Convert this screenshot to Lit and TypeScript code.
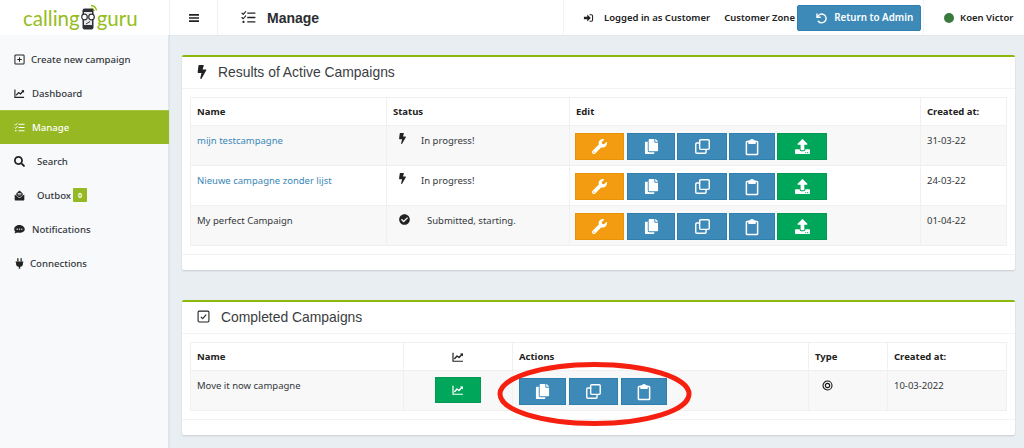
import { LitElement, html, css, svg } from "lit";
import { customElement } from "lit/decorators.js";

const fa = (vb: string, d: string) => html`<svg class="ic" viewBox="${vb}" fill="currentColor"><path d="${d}"></path></svg>`;
const st = (body: unknown) => html`<svg class="ic" viewBox="0 0 24 24" fill="none" stroke="currentColor" stroke-width="2" stroke-linecap="round" stroke-linejoin="round">${body}</svg>`;

const bolt = fa("0 0 320 512", "M296 160H180.6l42.6-129.8C227.2 15 215.7 0 200 0H56C44 0 33.8 8.9 32.2 20.8l-32 240C-1.7 275.2 9.5 288 24 288h118.7L96.6 482.5c-3.6 15.2 8 29.5 23.3 29.5 8.4 0 16.4-4.4 20.8-12l176-304c9.3-15.9-2.2-36-20.7-36z");
const wrench = fa("0 0 512 512", "M507.73 109.1c-2.24-9.03-13.54-12.09-20.12-5.51l-74.36 74.36-67.88-11.31-11.31-67.88 74.36-74.36c6.62-6.62 3.43-17.9-5.66-20.16-47.38-11.74-99.55.91-136.58 37.93-39.64 39.64-50.55 97.1-34.05 147.2L18.74 402.76c-24.99 24.99-24.99 65.51 0 90.5 24.99 24.99 65.51 24.99 90.5 0l213.21-213.21c50.12 16.71 107.47 5.68 147.37-34.22 37.07-37.07 49.7-89.32 37.91-136.73zM64 472c-13.25 0-24-10.75-24-24 0-13.26 10.75-24 24-24s24 10.74 24 24c0 13.25-10.75 24-24 24z");
const copy = fa("0 0 448 512", "M320 448v40c0 13.255-10.745 24-24 24H24c-13.255 0-24-10.745-24-24V120c0-13.255 10.745-24 24-24h72v296c0 30.879 25.121 56 56 56h168zm0-344V0H152c-13.255 0-24 10.745-24 24v368c0 13.255 10.745 24 24 24h272c13.255 0 24-10.745 24-24V128H344c-13.2 0-24-10.8-24-24zm120.971-31.029L375.029 7.029A24 24 0 0 0 358.059 0H352v96h96v-6.059a24 24 0 0 0-7.029-16.97z");
const upload = fa("0 0 512 512", "M296 384h-80c-13.3 0-24-10.7-24-24V192h-87.7c-17.8 0-26.7-21.5-14.1-34.1L242.3 5.7c7.5-7.5 19.8-7.5 27.3 0l152.2 152.2c12.6 12.6 3.7 34.1-14.1 34.1H320v168c0 13.3-10.7 24-24 24zm216-8v112c0 13.3-10.7 24-24 24H24c-13.3 0-24-10.7-24-24V376c0-13.3 10.7-24 24-24h136v8c0 30.9 25.1 56 56 56h80c30.9 0 56-25.1 56-56v-8h136c13.3 0 24 10.7 24 24zm-124 88c0-11-9-20-20-20s-20 9-20 20 9 20 20 20 20-9 20-20zm64 0c0-11-9-20-20-20s-20 9-20 20 9 20 20 20 20-9 20-20z");
const search = fa("0 0 512 512", "M505 442.7L405.3 343c-4.5-4.5-10.6-7-17-7H372c27.6-35.3 44-79.7 44-128C416 93.1 322.9 0 208 0S0 93.1 0 208s93.1 208 208 208c48.3 0 92.7-16.4 128-44v16.3c0 6.4 2.5 12.5 7 17l99.7 99.7c9.4 9.4 24.6 9.4 33.9 0l28.3-28.3c9.4-9.4 9.4-24.6.1-34zM208 336c-70.7 0-128-57.2-128-128 0-70.7 57.2-128 128-128 70.7 0 128 57.2 128 128 0 70.7-57.2 128-128 128z");
const check = fa("0 0 512 512", "M504 256c0 136.967-111.033 248-248 248S8 392.967 8 256 119.033 8 256 8s248 111.033 248 248zM227.314 387.314l184-184c6.248-6.248 6.248-16.379 0-22.627l-22.627-22.627c-6.248-6.249-16.379-6.249-22.628 0L216 308.118l-70.059-70.059c-6.248-6.248-16.379-6.248-22.628 0l-22.627 22.627c-6.248 6.248-6.248 16.379 0 22.627l104 104c6.249 6.249 16.379 6.249 22.628.001z");
const clone = st(svg`<rect x="8" y="2.500" width="13.500" height="13.500" rx="1.500"/><path d="M8 7H4a1.500 1.500 0 0 0-1.500 1.500V20a1.500 1.500 0 0 0 1.500 1.500h11.500A1.500 1.500 0 0 0 17 20v-4"/>`);
const clip = st(svg`<path d="M8 4.500H5.500a1 1 0 0 0-1 1V21a1 1 0 0 0 1 1h13a1 1 0 0 0 1-1V5.500a1 1 0 0 0-1-1H16"/><path d="M8 7V4h2.200a1.800 1.800 0 0 1 3.600 0H16v3z" fill="currentColor"/>`);
const chart = st(svg`<path d="M2 3.500V20.500H22" stroke-linecap="butt" stroke-linejoin="miter" stroke-width="2.400"/><path d="M5.500 15l4.500-5 4 3 6-6.500" stroke-width="2.800"/><path d="M16 5h6v6z" fill="currentColor" stroke="none"/>`);
const listCheck = st(svg`<path d="M10 5h13M10 12h13M10 19h13" stroke-linecap="butt" stroke-width="2.200"/><path d="M1.500 5l2 2L7.500 2.500M1.500 12l2 2 4-4.500" stroke-width="1.800"/><circle cx="4" cy="19" r="1.800" fill="currentColor" stroke="none"/>`);
const plusBox = st(svg`<rect x="2" y="2" width="20" height="20" rx="2" stroke-width="2.200"/><path d="M12 7v10M7 12h10" stroke-linecap="butt" stroke-width="2.200"/>`);
const checkBox = st(svg`<rect x="2" y="2" width="20" height="20" rx="2"/><path d="M7 12.500l3.500 3.500 6.500-7.500" stroke-linecap="butt"/>`);
const inbox = html`<svg class="ic" viewBox="0 0 24 24" fill="currentColor"><path d="M5 7.500 12 1l7 6.500V12l-7 4.500L5 12zM8 6.500v1.700h8V6.500zM8 10v1.700h8V10z" fill-rule="evenodd"></path><path d="M1.500 10v11.500A1.500 1.500 0 0 0 3 23h18a1.500 1.500 0 0 0 1.500-1.500V10l-10.500 8z"></path></svg>`;
const dots = html`<svg class="ic" viewBox="0 0 24 24"><path fill="currentColor" d="M12 2C5.600 2 .5 6.100 .5 11.200c0 2.100.9 4.100 2.400 5.600-.5 1.800-2.100 3.400-2.200 3.500 3.200.1 5.200-1 6.400-2 1.500.6 3.200.9 4.900.9 6.400 0 11.500-3.800 11.500-8S18.400 2 12 2z"></path><circle cx="7" cy="11.200" r="1.600" fill="#f8f9fb"></circle><circle cx="12" cy="11.200" r="1.600" fill="#f8f9fb"></circle><circle cx="17" cy="11.200" r="1.600" fill="#f8f9fb"></circle></svg>`;
const plug = html`<svg class="ic" viewBox="0 0 24 24" fill="currentColor"><path d="M7 .5h2.800v6.500H7zM14.200 .5H17V7h-2.800zM3.500 7.500h17V10h-1v2.500a7 7 0 0 1-6 6.800V23.500h-3v-4.200a7 7 0 0 1-6-6.800V10h-1z"></path></svg>`;
const menu = html`<svg class="ic" viewBox="0 0 24 24" fill="currentColor"><path d="M2 4h20v3.400H2zM2 10.300h20v3.400H2zM2 16.600h20V20H2z"></path></svg>`;
const signIn = html`<svg class="ic" viewBox="0 0 24 24" fill="currentColor"><path d="M1 9h8V3.500L17.500 12 9 20.500V15H1z"></path><path d="M14.500 3H19a4 4 0 0 1 4 4v10a4 4 0 0 1-4 4h-4.500v-2.600H19a1.500 1.500 0 0 0 1.500-1.500V7a1.500 1.500 0 0 0-1.500-1.500h-4.500z"></path></svg>`;
const undo = st(svg`<path d="M4 3v7.500h7.500" stroke-width="2.800" stroke-linecap="butt" stroke-linejoin="miter"/><path d="M5 10a8.800 8.800 0 1 1 1.500 8.500" stroke-width="2.800"/>`);
const bullseye = st(svg`<circle cx="12" cy="12" r="9.800" stroke-width="2.400"/><circle cx="12" cy="12" r="4.700" stroke-width="2.400"/>`);

const nav = [
  { icon: plusBox, label: "Create new campaign", gap: "g-a" },
  { icon: chart, label: "Dashboard", gap: "g-b" },
  { icon: listCheck, label: "Manage", gap: "g-b", active: true },
  { icon: search, label: "Search", gap: "g-c" },
  { icon: inbox, label: "Outbox", gap: "g-c", badge: "0" },
  { icon: dots, label: "Notifications", gap: "g-b" },
  { icon: plug, label: "Connections", gap: "g-d" },
];

const btn = (cls: string, icon: unknown) => html`<span class="btn ${cls}">${icon}</span>`;
const editCell = html`<div class="btns">${btn("orange w49", wrench)}${btn("blue w48", copy)}${btn("blue w50 cl", clone)}${btn("blue w46 cb", clip)}${btn("green w50", upload)}</div>`;
const actionCell = html`<div class="btns actions">${btn("blue w47", copy)}${btn("blue w49 cl", clone)}${btn("blue w46 cb", clip)}</div>`;

const rows = [
  { name: "mijn testcampagne", link: true, icon: bolt, status: "In progress!", cls: "bolt", date: "31-03-22" },
  { name: "Nieuwe campagne zonder lijst", link: true, icon: bolt, status: "In progress!", cls: "bolt", date: "24-03-22" },
  { name: "My perfect Campaign", link: false, icon: check, status: "Submitted, starting.", cls: "chk", date: "01-04-22" },
];

@customElement("app-root")
export class AppRoot extends LitElement {
  static styles = css`
    :host { display: block; width: 1024px; height: 448px; overflow: hidden; font-family: "Noto Sans", "Open Sans", sans-serif; font-size: 9.5px; color: #2b2f33; background: #e9eef3; position: relative; }
    * { box-sizing: border-box; }
    .ic { display: block; width: 100%; height: 100%; }
    .layout { display: grid; grid-template-columns: 170px 1fr; grid-template-rows: 36px 1fr; height: 448px; }

    .logo { background: #fff; display: flex; align-items: center; padding-left: 23px; color: #95bd1c; font-family: "Lato", sans-serif; font-size: 20.5px; border-right: 1px solid #eef1f4; height: 35px; }
    .logo svg { width: 18px; height: 26px; flex: none; margin: -1px -1px 0 0; }
    .topbar { background: #fff; height: 36px; border-bottom: 1px solid #e3e7eb; display: flex; align-items: stretch; }
    .menu { width: 48px; border-right: 1px solid #eef1f4; display: flex; align-items: center; justify-content: center; color: #222; }
    .menu span { width: 12px; height: 12px; }
    .page { display: flex; align-items: center; width: 346px; border-right: 1px solid #f1f3f5; padding-left: 23px; }
    .page i { width: 15px; height: 15px; margin-right: 11px; color: #222; flex: none; }
    .page b { font: bold 14px "Liberation Sans", sans-serif; color: #2a2d30; }
    .right { display: flex; align-items: center; width: 360px; border-right: 1px solid #f1f3f5; font-weight: 600; color: #222; padding-left: 19px; white-space: nowrap; }
    .right > i { width: 11px; height: 10px; margin-right: 10px; flex: none; }
    .zone { width: 71px; margin-left: 14px; margin-right: 2px; flex: none; }
    .return { display: flex; align-items: center; width: 124px; height: 26px; flex: none; background: #3d8ab9; border: 1px solid #2f7fb0; border-radius: 2px; color: #fff; padding-left: 17px; font-size: 9.8px; }
    .return i { width: 12px; height: 12px; margin-right: 7px; flex: none; }
    .user { display: flex; align-items: center; padding-left: 20px; font-weight: 600; color: #222; white-space: nowrap; }
    .dot { width: 10px; height: 10px; border-radius: 50%; background: #3a7a3e; margin-right: 6px; flex: none; }

    .side { background: #f8f9fb; border-right: 2px solid #dfe5ec; padding-top: 7px; margin-top: -1px; }
    .item { height: 34px; display: flex; align-items: center; padding-left: 14px; color: #33373b; font-weight: 500; white-space: nowrap; font-size: 9.6px; }
    .item i { width: 11px; height: 11px; color: #222; flex: none; }
    .item.active { background: #95b823; color: #fff; margin-right: -1px; border-top: 1px solid #a6c53c; }
    .item.active i { color: #fff; }
    .g-a i { margin-right: 6px; } .g-b i { margin-right: 7px; } .g-c i { margin-right: 12px; } .g-d i { margin-right: 5px; }
    .badge { background: #95b823; color: #fff; font-size: 7px; font-weight: 700; width: 14px; height: 14px; display: flex; align-items: center; justify-content: center; margin-left: 2px; border-radius: 1px; }

    .main { padding: 19px 9px 0 12px; overflow: hidden; }
    .card { background: #fff; border-top: 2px solid #8cb90c; border-radius: 2px; box-shadow: 0 1px 2px rgba(0,0,0,.14); margin-bottom: 30px; }
    .head { height: 32px; border-bottom: 1px solid #f1f3f5; display: flex; align-items: center; padding: 0 0 2px 15px; font: 13.9px "Liberation Sans", sans-serif; color: #3a3d40; }
    .head i { flex: none; }
    .head.a i { width: 10px; height: 14px; margin-right: 11px; color: #222; }
    .head.b i { width: 13px; height: 13px; margin-right: 11px; color: #222; }
    .body { padding: 8px 8px; }
    .foot { height: 16px; border-top: 1px solid #f1f3f5; }
    table { width: 100%; border-collapse: collapse; table-layout: fixed; font-size: 9.5px; }
    .c79 { width: 79px; } .c109 { width: 109px; } .c183 { width: 183px; } .c196 { width: 196px; } .c213 { width: 213px; } .c296 { width: 296px; } .c351 { width: 351px; }
    th, td { border: 1px solid #f0f0f0; text-align: left; vertical-align: top; padding: 0 6px; color: #33373b; font-weight: 400; white-space: nowrap; }
    th { height: 28px; vertical-align: middle; font-weight: 700; color: #222; }
    td { height: 40px; padding-top: 8px; }
    td.cta { padding: 7px 0 0 5px; }
    td.gcell { padding: 6px 0 0; }
    tbody tr:nth-child(odd) td { background: #f8f8f8; }
    td a { color: #3a87b7; }
    .status { display: flex; align-items: flex-start; padding-left: 6px; }
    .status i { flex: none; }
    .status.bolt i { width: 7px; height: 11px; margin-right: 15px; color: #222; margin-top: -1px; }
    .status.chk i { width: 11px; height: 11px; margin-right: 17px; color: #222; }
    .btns { display: flex; gap: 2px; }
    .btns .orange { margin-right: 1px; }
    .actions { gap: 3px; padding-left: 1px; }
    .btn { display: flex; align-items: center; justify-content: center; height: 27px; flex: none; border: 1px solid; color: #fff; }
    .btn svg { width: 15px; height: 15px; }
    .btn.cl svg { width: 17px; height: 17px; }
    .btn.cb svg { width: 18px; height: 18px; }
    .blue { background: #3d89b8; border-color: #2f7eae; }
    .orange { background: #f39c12; border-color: #e89207; }
    .green { background: #00a65a; border-color: #049952; }
    .w46 { width: 46px; } .w47 { width: 47px; } .w48 { width: 48px; } .w49 { width: 49px; } .w50 { width: 50px; }
    .center { text-align: center; }
    .thi { display: inline-block; width: 12px; height: 12px; vertical-align: middle; color: #222; }
    .graph { margin: 0 auto; width: 46px; height: 26px; }
    .graph svg { width: 12px; height: 12px; }
    .type { width: 11px; height: 11px; margin-left: 7px; margin-top: 1px; color: #111; }

    .oval { position: absolute; left: 497px; top: 361px; width: 195px; height: 66px; pointer-events: none; }
  `;

  render() {
    return html`
      <div class="layout">
        <div class="logo">calling<svg viewBox="0 0 18 26" fill="none">
            <path d="M11 1.500a6 6 0 0 1 5.500 5" stroke="#95bd1c" stroke-width="1.400"></path>
            <path d="M11.500 4a3.500 3.500 0 0 1 2.800 3" stroke="#95bd1c" stroke-width="1.200"></path>
            <rect x="2.500" y="4.500" width="11" height="21" rx="2" fill="#2e3236"></rect>
            <rect x="4" y="8" width="8" height="13" fill="#e8e8e8"></rect>
            <circle cx="4.500" cy="13" r="2.800" fill="#fff" stroke="#2e3236" stroke-width="1.200"></circle>
            <circle cx="11.500" cy="13" r="2.800" fill="#fff" stroke="#2e3236" stroke-width="1.200"></circle>
            <path d="M6 20l4-2.500" stroke="#2e3236" stroke-width="1"></path>
          </svg>guru</div>
        <div class="topbar">
          <div class="menu"><span>${menu}</span></div>
          <div class="page"><i>${listCheck}</i><b>Manage</b></div>
          <div class="right"><i>${signIn}</i>Logged in as Customer<span class="zone">Customer Zone</span>
            <div class="return"><i>${undo}</i>Return to Admin</div>
          </div>
          <div class="user"><span class="dot"></span>Koen Victor</div>
        </div>
        <div class="side">
          ${nav.map(n => html`<div class="item ${n.gap} ${n.active ? "active" : ""}"><i>${n.icon}</i>${n.label}${n.badge ? html`<span class="badge">${n.badge}</span>` : ""}</div>`)}
        </div>
        <div class="main">
          <section class="card">
            <div class="head a"><i>${bolt}</i>Results of Active Campaigns</div>
            <div class="body">
              <table>
                <colgroup><col class="c196"><col class="c183"><col class="c351"><col></colgroup>
                <thead><tr><th>Name</th><th>Status</th><th>Edit</th><th>Created at:</th></tr></thead>
                <tbody>
                  ${rows.map(r => html`<tr>
                    <td>${r.link ? html`<a>${r.name}</a>` : r.name}</td>
                    <td><div class="status ${r.cls}"><i>${r.icon}</i>${r.status}</div></td>
                    <td class="cta">${editCell}</td>
                    <td>${r.date}</td>
                  </tr>`)}
                </tbody>
              </table>
            </div>
            <div class="foot"></div>
          </section>
          <section class="card">
            <div class="head b"><i>${checkBox}</i>Completed Campaigns</div>
            <div class="body">
              <table>
                <colgroup><col class="c213"><col class="c109"><col class="c296"><col class="c79"><col></colgroup>
                <thead><tr><th>Name</th><th class="center"><span class="thi">${chart}</span></th><th>Actions</th><th>Type</th><th>Created at:</th></tr></thead>
                <tbody>
                  <tr>
                    <td>Move it now campagne</td>
                    <td class="gcell"><span class="btn green graph">${chart}</span></td>
                    <td class="cta">${actionCell}</td>
                    <td><div class="type">${bullseye}</div></td>
                    <td>10-03-2022</td>
                  </tr>
                </tbody>
              </table>
            </div>
            <div class="foot"></div>
          </section>
        </div>
      </div>
      <svg class="oval" viewBox="0 0 195 66" fill="none"><ellipse cx="97.500" cy="33" rx="94.500" ry="29.500" stroke="#f5200f" stroke-width="5"></ellipse></svg>
    `;
  }
}
